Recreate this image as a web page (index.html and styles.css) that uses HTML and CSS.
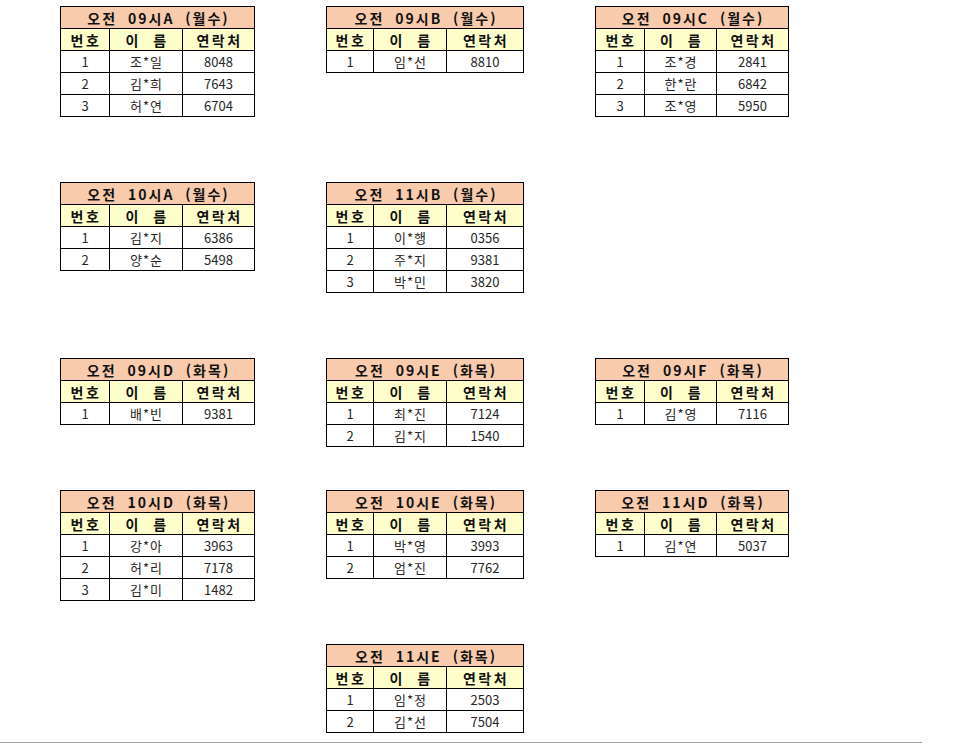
FILE: index.html
```html
<!DOCTYPE html>
<html lang="ko">
<head>
<meta charset="utf-8">
<link rel="stylesheet" href="styles.css">
</head>
<body>
<div class="sheet">
  <div class="board">
    <table class="roster w-a">
      <colgroup><col class="c1"><col class="c2"><col class="c3"></colgroup>
      <tr><th class="title" colspan="3">오전 09시A (월수)</th></tr>
      <tr class="head"><th>번호</th><th>이 름</th><th>연락처</th></tr>
      <tr><td>1</td><td class="name">조*일</td><td>8048</td></tr>
      <tr><td>2</td><td class="name">김*희</td><td>7643</td></tr>
      <tr><td>3</td><td class="name">허*연</td><td>6704</td></tr>
    </table>
    <table class="roster w-b">
      <colgroup><col class="c1"><col class="c2"><col class="c3"></colgroup>
      <tr><th class="title" colspan="3">오전 09시B (월수)</th></tr>
      <tr class="head"><th>번호</th><th>이 름</th><th>연락처</th></tr>
      <tr><td>1</td><td class="name">임*선</td><td>8810</td></tr>
    </table>
    <table class="roster w-c">
      <colgroup><col class="c1"><col class="c2"><col class="c3"></colgroup>
      <tr><th class="title" colspan="3">오전 09시C (월수)</th></tr>
      <tr class="head"><th>번호</th><th>이 름</th><th>연락처</th></tr>
      <tr><td>1</td><td class="name">조*경</td><td>2841</td></tr>
      <tr><td>2</td><td class="name">한*란</td><td>6842</td></tr>
      <tr><td>3</td><td class="name">조*영</td><td>5950</td></tr>
    </table>

    <table class="roster w-a">
      <colgroup><col class="c1"><col class="c2"><col class="c3"></colgroup>
      <tr><th class="title" colspan="3">오전 10시A (월수)</th></tr>
      <tr class="head"><th>번호</th><th>이 름</th><th>연락처</th></tr>
      <tr><td>1</td><td class="name">김*지</td><td>6386</td></tr>
      <tr><td>2</td><td class="name">양*순</td><td>5498</td></tr>
    </table>
    <table class="roster w-b">
      <colgroup><col class="c1"><col class="c2"><col class="c3"></colgroup>
      <tr><th class="title" colspan="3">오전 11시B (월수)</th></tr>
      <tr class="head"><th>번호</th><th>이 름</th><th>연락처</th></tr>
      <tr><td>1</td><td class="name">이*행</td><td>0356</td></tr>
      <tr><td>2</td><td class="name">주*지</td><td>9381</td></tr>
      <tr><td>3</td><td class="name">박*민</td><td>3820</td></tr>
    </table>
    <div class="blank"></div>

    <table class="roster w-a">
      <colgroup><col class="c1"><col class="c2"><col class="c3"></colgroup>
      <tr><th class="title" colspan="3">오전 09시D (화목)</th></tr>
      <tr class="head"><th>번호</th><th>이 름</th><th>연락처</th></tr>
      <tr><td>1</td><td class="name">배*빈</td><td>9381</td></tr>
    </table>
    <table class="roster w-b">
      <colgroup><col class="c1"><col class="c2"><col class="c3"></colgroup>
      <tr><th class="title" colspan="3">오전 09시E (화목)</th></tr>
      <tr class="head"><th>번호</th><th>이 름</th><th>연락처</th></tr>
      <tr><td>1</td><td class="name">최*진</td><td>7124</td></tr>
      <tr><td>2</td><td class="name">김*지</td><td>1540</td></tr>
    </table>
    <table class="roster w-c">
      <colgroup><col class="c1"><col class="c2"><col class="c3"></colgroup>
      <tr><th class="title" colspan="3">오전 09시F (화목)</th></tr>
      <tr class="head"><th>번호</th><th>이 름</th><th>연락처</th></tr>
      <tr><td>1</td><td class="name">김*영</td><td>7116</td></tr>
    </table>

    <table class="roster w-a">
      <colgroup><col class="c1"><col class="c2"><col class="c3"></colgroup>
      <tr><th class="title" colspan="3">오전 10시D (화목)</th></tr>
      <tr class="head"><th>번호</th><th>이 름</th><th>연락처</th></tr>
      <tr><td>1</td><td class="name">강*아</td><td>3963</td></tr>
      <tr><td>2</td><td class="name">허*리</td><td>7178</td></tr>
      <tr><td>3</td><td class="name">김*미</td><td>1482</td></tr>
    </table>
    <table class="roster w-b">
      <colgroup><col class="c1"><col class="c2"><col class="c3"></colgroup>
      <tr><th class="title" colspan="3">오전 10시E (화목)</th></tr>
      <tr class="head"><th>번호</th><th>이 름</th><th>연락처</th></tr>
      <tr><td>1</td><td class="name">박*영</td><td>3993</td></tr>
      <tr><td>2</td><td class="name">엄*진</td><td>7762</td></tr>
    </table>
    <table class="roster w-c">
      <colgroup><col class="c1"><col class="c2"><col class="c3"></colgroup>
      <tr><th class="title" colspan="3">오전 11시D (화목)</th></tr>
      <tr class="head"><th>번호</th><th>이 름</th><th>연락처</th></tr>
      <tr><td>1</td><td class="name">김*연</td><td>5037</td></tr>
    </table>

    <div class="blank"></div>
    <table class="roster w-b">
      <colgroup><col class="c1"><col class="c2"><col class="c3"></colgroup>
      <tr><th class="title" colspan="3">오전 11시E (화목)</th></tr>
      <tr class="head"><th>번호</th><th>이 름</th><th>연락처</th></tr>
      <tr><td>1</td><td class="name">임*정</td><td>2503</td></tr>
      <tr><td>2</td><td class="name">김*선</td><td>7504</td></tr>
    </table>
    <div class="blank"></div>
  </div>
  <div class="page-break"></div>
</div>
</body>
</html>
```

FILE: styles.css
```css
html, body {
  margin: 0;
  padding: 0;
  background: #ffffff;
}

.sheet {
  padding-top: 6px;
  font-family: "Noto Sans CJK KR", "Noto Sans", sans-serif;
  color: #1a1a1a;
}

.board {
  display: grid;
  grid-template-columns: 195px 198px 194px;
  grid-template-rows: 176px 176px 132px 154px 98px;
  column-gap: 71px;
  padding-left: 60px;
  align-items: start;
}

.roster {
  border-collapse: separate;
  border-spacing: 0;
  table-layout: fixed;
  border-top: 1px solid #000;
  border-left: 1px solid #000;
}

.roster th,
.roster td {
  box-sizing: border-box;
  height: 22px;
  padding: 0;
  border-right: 1px solid #000;
  border-bottom: 1px solid #000;
  text-align: center;
  vertical-align: middle;
  white-space: nowrap;
  line-height: 20px;
}

.roster td {
  font-size: 13px;
  font-weight: 400;
  color: #262626;
}

.roster td.name {
  letter-spacing: 1px;
  text-indent: 1px;
}

.roster .title {
  background: #f8cbad;
  font-size: 14px;
  font-weight: 700;
  letter-spacing: 2px;
  word-spacing: 5px;
  text-indent: 2px;
  color: #111;
}

.roster .head th {
  background: #ffffcc;
  font-size: 14px;
  font-weight: 700;
  letter-spacing: 2.5px;
  word-spacing: 6px;
  text-indent: 2px;
  color: #111;
}

.w-a { width: 195px; }
.w-a .c1 { width: 49px; }
.w-a .c2 { width: 73px; }
.w-a .c3 { width: 72px; }

.w-b { width: 198px; }
.w-b .c1 { width: 47px; }
.w-b .c2 { width: 73px; }
.w-b .c3 { width: 77px; }

.w-c { width: 194px; }
.w-c .c1 { width: 49px; }
.w-c .c2 { width: 72px; }
.w-c .c3 { width: 72px; }

.page-break {
  width: 922px;
  height: 0;
  border-top: 1px solid #a0a0a0;
}
```
